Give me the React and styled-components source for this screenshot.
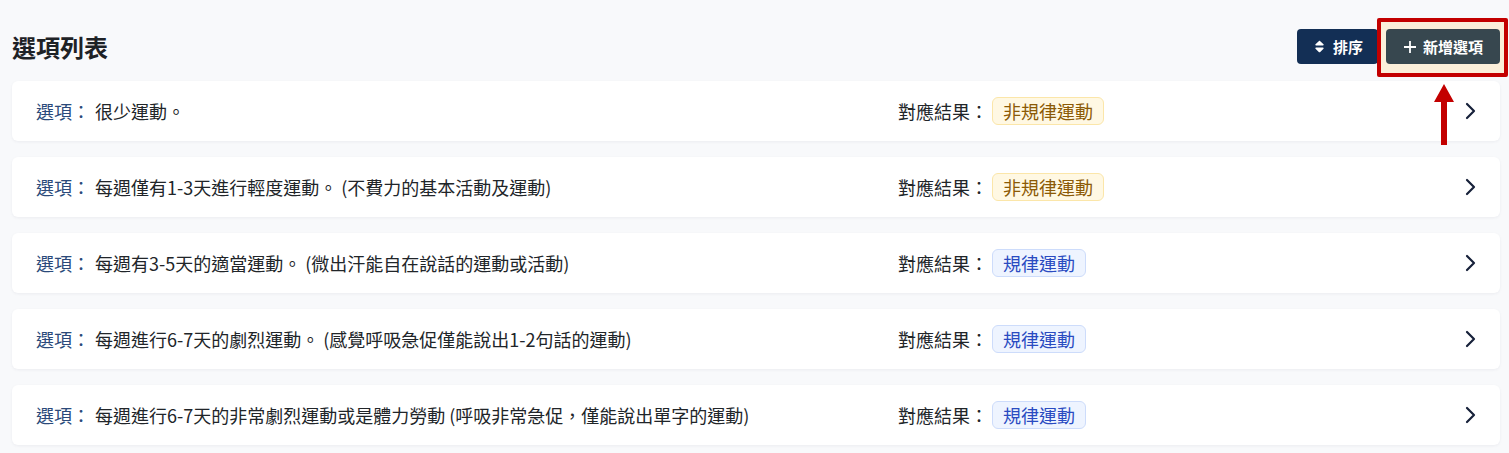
import styled, { createGlobalStyle } from "styled-components";
import { FaSort } from "react-icons/fa";

const GlobalStyle = createGlobalStyle`
  html, body {
    margin: 0;
    padding: 0;
    background: #f8f9fb;
    font-family: "Noto Sans CJK TC", "Noto Sans", sans-serif;
    color: #212529;
  }
`;

const Page = styled.main`
  padding: 29px 9px 12px 12px;
  display: flex;
  flex-direction: column;
  gap: 17px;
`;

const Header = styled.header`
  display: flex;
  align-items: center;
  justify-content: space-between;
  height: 35px;
`;

const Title = styled.h1`
  margin: 0;
  font-size: 24px;
  font-weight: 700;
  color: #1e2226;
  line-height: 1;
`;

const Actions = styled.div`
  display: flex;
  gap: 8px;
`;

const Button = styled.button`
  display: flex;
  align-items: center;
  gap: 6px;
  height: 35px;
  padding: 0 ${(p) => p.$pad || 17}px;
  border: none;
  border-radius: 4px;
  background: ${(p) => p.$bg};
  color: #fff;
  font-family: inherit;
  font-size: 15px;
  font-weight: 700;
  cursor: pointer;
`;

const Highlight = styled.div`
  position: relative;
`;

const HighlightBox = styled.div`
  position: absolute;
  left: -9px;
  right: -8px;
  top: -11px;
  bottom: -13px;
  border: 4px solid #c30000;
  background: #fbefda;
  border-radius: 2px;
  z-index: 0;
  box-sizing: border-box;
`;

const Arrow = styled.svg`
  position: absolute;
  left: 47px;
  top: 55px;
  z-index: 2;
`;

const Front = styled.div`
  position: relative;
  z-index: 1;
`;

const List = styled.section`
  display: flex;
  flex-direction: column;
  gap: 16px;
`;

const Card = styled.article`
  display: grid;
  grid-template-columns: 862px 1fr auto;
  align-items: center;
  height: 60px;
  padding: 0 24px;
  background: #fff;
  border-radius: 6px;
  box-shadow: 0 1px 3px rgba(30, 40, 60, 0.06);
  font-size: 18px;
`;

const Option = styled.div`
  display: flex;
  align-items: center;
  color: #212529;
  white-space: nowrap;
`;

const Label = styled.span`
  color: #2b4a7a;
  margin-right: 5px;
`;

const Result = styled.div`
  display: flex;
  align-items: center;
  gap: 4px;
  white-space: nowrap;
`;

const Badge = styled.span`
  display: inline-flex;
  align-items: center;
  height: 28px;
  box-sizing: border-box;
  padding: 0 10px;
  border-radius: 6px;
  border: 1px solid ${(p) => (p.$tone === "warn" ? "#fbe6a9" : "#cddcfb")};
  background: ${(p) => (p.$tone === "warn" ? "#fff8e3" : "#eef4ff")};
  color: ${(p) => (p.$tone === "warn" ? "#8c5a06" : "#2a4bc1")};
  font-size: 18px;
`;

const Chevron = () => (
  <svg width="12" height="18" viewBox="0 0 12 18">
    <polyline
      points="3,2 10,9 3,16"
      fill="none"
      stroke="#17213a"
      strokeWidth="2.2"
      strokeLinecap="round"
      strokeLinejoin="round"
    />
  </svg>
);

const PlusIcon = () => (
  <svg width="14" height="14" viewBox="0 0 14 14">
    <path d="M7 1v12M1 7h12" stroke="#fff" strokeWidth="1.8" />
  </svg>
);

const options = [
  { text: "很少運動。", result: "非規律運動", tone: "warn" },
  { text: "每週僅有1-3天進行輕度運動。 (不費力的基本活動及運動)", result: "非規律運動", tone: "warn" },
  { text: "每週有3-5天的適當運動。 (微出汗能自在說話的運動或活動)", result: "規律運動", tone: "info" },
  { text: "每週進行6-7天的劇烈運動。 (感覺呼吸急促僅能說出1-2句話的運動)", result: "規律運動", tone: "info" },
  { text: "每週進行6-7天的非常劇烈運動或是體力勞動 (呼吸非常急促，僅能說出單字的運動)", result: "規律運動", tone: "info" },
];

export default function App() {
  return (
    <>
      <GlobalStyle />
      <Page>
        <Header>
          <Title>選項列表</Title>
          <Actions>
            <Button $bg="#132f55" $pad={15}>
              <FaSort size={15} />
              排序
            </Button>
            <Highlight>
              <HighlightBox />
              <Front>
                <Button $bg="#37474f">
                  <PlusIcon />
                  新增選項
                </Button>
              </Front>
              <Arrow width="22" height="62" viewBox="0 0 22 62">
                <polygon points="11,0 21,18 14,18 14,61 8,61 8,18 1,18" fill="#c30000" />
              </Arrow>
            </Highlight>
          </Actions>
        </Header>
        <List>
          {options.map((o, i) => (
            <Card key={i}>
              <Option>
                <Label>選項：</Label>
                {o.text}
              </Option>
              <Result>
                對應結果：
                <Badge $tone={o.tone}>{o.result}</Badge>
              </Result>
              <Chevron />
            </Card>
          ))}
        </List>
      </Page>
    </>
  );
}
